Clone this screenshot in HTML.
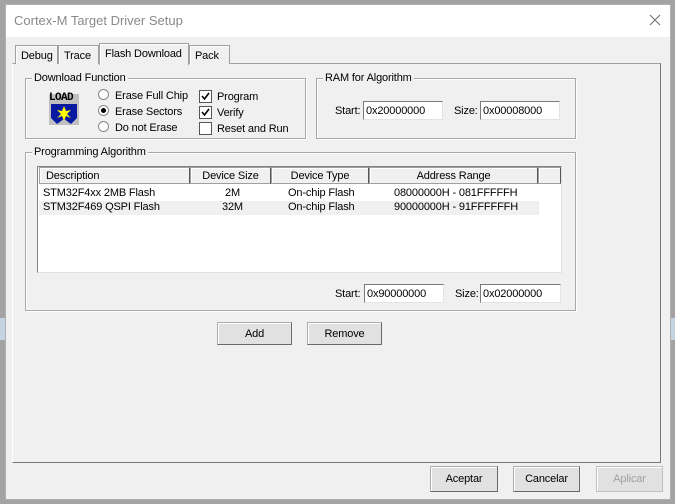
<!DOCTYPE html>
<html><head><style>
*{box-sizing:border-box;margin:0;padding:0}
body{width:675px;height:504px;background:#a3a3a3;position:relative;overflow:hidden;font-family:"Liberation Sans",sans-serif;font-size:11px;letter-spacing:-0.15px;color:#000}
.a{position:absolute;white-space:nowrap}
.t{margin-top:1px}
.win{left:5px;top:4px;width:666px;height:496px;background:#f0f0f0;border:1px solid #b0b0b0}
.title{left:6px;top:5px;width:664px;height:32px;background:#fff}
.gb{position:absolute;border:1px solid #a8a8a8;box-shadow:inset 1px 1px 0 #fff,1px 1px 0 #fff}
.gl{position:absolute;background:#f0f0f0;padding:0 2px;top:-7px;left:6px;white-space:nowrap}
.inp{position:absolute;background:#fff;border:1px solid #7a7a7a;border-right-color:#e3e3e3;border-bottom-color:#e3e3e3;height:19px;padding:3px 2px 0;line-height:13px;color:#000;white-space:nowrap}
.btn{position:absolute;background:#e1e1e1;border:1px solid #adadad;border-right-color:#6a6a6a;border-bottom-color:#6a6a6a;box-shadow:inset 1px 1px 0 #fff;text-align:center;line-height:22px;white-space:nowrap}
.tab{position:absolute;top:45px;height:19px;border:1px solid #a0a0a0;border-bottom:none;background:#f0f0f0;padding:4px 0 0 5px;box-shadow:inset 1px 1px 0 #fff;white-space:nowrap}
.rad{position:absolute;width:11px;height:11px;border-radius:50%;border:1px solid #888;background:#fff}
.chk{position:absolute;width:13px;height:13px;border:1px solid #555;background:#fff}
.hd{position:absolute;top:0;height:17px;border:1px solid #a0a0a0;border-right-color:#555;background:#f0f0f0;box-shadow:inset 1px 1px 0 #fff;text-align:center;line-height:16px;white-space:nowrap}
</style></head><body>
<div class="a" style="left:0;top:318px;width:6px;height:22px;background:#c5d3e2"></div>
<div class="a" style="left:671px;top:318px;width:4px;height:22px;background:#c5d3e2"></div>
<div class="a win"></div>
<div class="a title"></div>
<div class="a" style="left:14px;top:13px;font-size:13px;letter-spacing:0;color:#8a8a8a">Cortex-M Target Driver Setup</div>
<svg class="a" style="left:649px;top:14px" width="12" height="12"><path d="M1 1L11 11M11 1L1 11" stroke="#777" stroke-width="1.2"/></svg>

<div class="a" style="left:12px;top:63px;width:649px;height:400px;border:1px solid #fff;border-right-color:#777;border-bottom-color:#777;border-top-color:#a0a0a0"></div>
<div class="tab" style="left:15px;width:43px">Debug</div>
<div class="tab" style="left:58px;width:41px">Trace</div>
<div class="tab" style="left:189px;width:41px">Pack</div>
<div class="tab" style="left:99px;top:43px;height:22px;width:90px;padding-top:4px;z-index:2;background:#f0f0f0">Flash Download</div>

<div class="gb" style="left:25px;top:78px;width:281px;height:61px"><span class="gl">Download Function</span></div>
<div class="a" style="left:49px;top:94px;width:30px;height:31px;background:#c0c0c0"></div>
<div class="a" style="left:49px;top:92px;font:bold 11px 'Liberation Mono',monospace;letter-spacing:-0.6px">LOAD</div>
<svg class="a" style="left:49px;top:104px" width="30" height="21"><path d="M2 0H28V14L22 20L15 15L8 20L2 14Z" fill="#0a1aa0"/><path d="M15 2L17 7L22 6L18 10L22 14L17 12L15 17L13 12L8 14L12 10L8 6L13 7Z" fill="#ffff00"/></svg>
<div class="rad" style="left:98px;top:89px"></div><div class="a" style="left:115px;top:90px">Erase Full Chip</div>
<div class="rad" style="left:98px;top:105px"></div><div class="a" style="left:101px;top:108px;width:5px;height:5px;border-radius:50%;background:#000"></div><div class="a" style="left:115px;top:106px">Erase Sectors</div>
<div class="rad" style="left:98px;top:121px"></div><div class="a" style="left:115px;top:122px">Do not Erase</div>
<div class="chk" style="left:199px;top:90px"><svg width="11" height="11"><path d="M2 5L4.5 8L9 2" stroke="#000" stroke-width="1.6" fill="none"/></svg></div><div class="a" style="left:217px;top:91px">Program</div>
<div class="chk" style="left:199px;top:106px"><svg width="11" height="11"><path d="M2 5L4.5 8L9 2" stroke="#000" stroke-width="1.6" fill="none"/></svg></div><div class="a" style="left:217px;top:107px">Verify</div>
<div class="chk" style="left:199px;top:122px"></div><div class="a" style="left:217px;top:123px">Reset and Run</div>

<div class="gb" style="left:316px;top:78px;width:260px;height:61px"><span class="gl">RAM for Algorithm</span></div>
<div class="a" style="left:335px;top:105px">Start:</div><div class="inp" style="left:363px;top:101px;width:80px">0x20000000</div>
<div class="a" style="left:454px;top:105px">Size:</div><div class="inp" style="left:480px;top:101px;width:80px">0x00008000</div>

<div class="gb" style="left:25px;top:152px;width:551px;height:159px"><span class="gl">Programming Algorithm</span></div>
<div class="a" style="left:37px;top:166px;width:525px;height:107px;background:#fff;border:1px solid #828282;border-right-color:#e0e0e0;border-bottom-color:#e0e0e0">
<div class="hd" style="left:1px;width:151px;text-align:left;padding-left:6px">Description</div>
<div class="hd" style="left:152px;width:81px">Device Size</div>
<div class="hd" style="left:233px;width:98px">Device Type</div>
<div class="hd" style="left:331px;width:169px">Address Range</div>
<div class="hd" style="left:500px;width:23px"></div>
<div class="a" style="left:1px;top:34px;width:500px;height:14px;background:#f0f0f0"></div>
<div class="a" style="left:5px;top:20px">STM32F4xx 2MB Flash</div>
<div class="a" style="left:187px;top:20px">2M</div>
<div class="a" style="left:250px;top:20px">On-chip Flash</div>
<div class="a" style="left:356px;top:20px">08000000H - 081FFFFFH</div>
<div class="a" style="left:5px;top:34px">STM32F469 QSPI Flash</div>
<div class="a" style="left:184px;top:34px">32M</div>
<div class="a" style="left:250px;top:34px">On-chip Flash</div>
<div class="a" style="left:356px;top:34px">90000000H - 91FFFFFFH</div>
</div>
<div class="a" style="left:335px;top:288px">Start:</div><div class="inp" style="left:364px;top:284px;width:80px">0x90000000</div>
<div class="a" style="left:455px;top:288px">Size:</div><div class="inp" style="left:480px;top:284px;width:81px">0x02000000</div>

<div class="btn" style="left:217px;top:322px;width:75px;height:23px">Add</div>
<div class="btn" style="left:307px;top:322px;width:75px;height:23px">Remove</div>

<div class="btn" style="left:430px;top:466px;width:68px;height:26px;line-height:24px">Aceptar</div>
<div class="btn" style="left:513px;top:466px;width:67px;height:26px;line-height:24px">Cancelar</div>
<div class="btn" style="left:596px;top:466px;width:67px;height:26px;line-height:24px;color:#a0a0a0;border-color:#c0c0c0">Aplicar</div>
</body></html>
